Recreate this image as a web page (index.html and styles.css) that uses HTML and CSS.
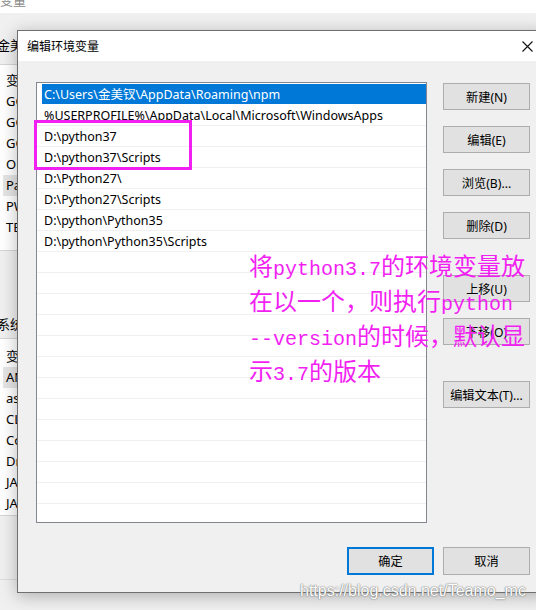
FILE: index.html
```html
<!DOCTYPE html>
<html lang="zh-CN">
<head>
<meta charset="utf-8">
<title>编辑环境变量</title>
<link rel="stylesheet" href="styles.css">
</head>
<body>
<div class="screen">
  <div class="parent">
    <div class="p-top"><span>变量</span></div>
    <div class="p-label user">金美钗 的用户变量(U)</div>
    <div class="p-list user-list">
      <div class="p-row">变量</div>
      <div class="p-row">GOPATH</div>
      <div class="p-row">GOROOT</div>
      <div class="p-row">GOBIN</div>
      <div class="p-row">OneDrive</div>
      <div class="p-row hl">Path</div>
      <div class="p-row">PWD</div>
      <div class="p-row">TEMP</div>
    </div>
    <div class="p-label sys">系统变量(S)</div>
    <div class="p-list sys-list">
      <div class="p-row">变量</div>
      <div class="p-row hl">ANDROID_HOME</div>
      <div class="p-row">asl.log</div>
      <div class="p-row">CLASSPATH</div>
      <div class="p-row">ComSpec</div>
      <div class="p-row">DriverData</div>
      <div class="p-row">JAVA_HOME</div>
      <div class="p-row">JAVA_HOME2</div>
    </div>
    <div class="p-foot"></div>
  </div>

  <div class="dialog">
    <div class="d-title">
      <span class="d-title-text">编辑环境变量</span>
      <svg class="d-close" width="11" height="11" viewBox="0 0 11 11"><path d="M0.5 0.5 L10.5 10.5 M10.5 0.5 L0.5 10.5" stroke="#111" stroke-width="1.1" fill="none"/></svg>
    </div>
    <div class="d-body">
      <div class="list">
        <div class="row sel"><div class="cell">C:\Users\金美钗\AppData\Roaming\npm</div></div>
        <div class="row"><div class="cell">%USERPROFILE%\AppData\Local\Microsoft\WindowsApps</div></div>
        <div class="row"><div class="cell">D:\python37</div></div>
        <div class="row"><div class="cell">D:\python37\Scripts</div></div>
        <div class="row"><div class="cell">D:\Python27\</div></div>
        <div class="row"><div class="cell">D:\Python27\Scripts</div></div>
        <div class="row"><div class="cell">D:\python\Python35</div></div>
        <div class="row"><div class="cell">D:\python\Python35\Scripts</div></div>
        <div class="row"><div class="cell"></div></div>
        <div class="row"><div class="cell"></div></div>
        <div class="row"><div class="cell"></div></div>
        <div class="row"><div class="cell"></div></div>
        <div class="row"><div class="cell"></div></div>
        <div class="row"><div class="cell"></div></div>
        <div class="row"><div class="cell"></div></div>
        <div class="row"><div class="cell"></div></div>
        <div class="row"><div class="cell"></div></div>
        <div class="row"><div class="cell"></div></div>
        <div class="row"><div class="cell"></div></div>
        <div class="row"><div class="cell"></div></div>
        <div class="row"><div class="cell"></div></div>
      </div>
      <div class="btns">
        <button class="btn">新建(N)</button>
        <button class="btn">编辑(E)</button>
        <button class="btn">浏览(B)...</button>
        <button class="btn">删除(D)</button>
        <button class="btn big-gap">上移(U)</button>
        <button class="btn">下移(O)</button>
        <button class="btn big-gap">编辑文本(T)...</button>
      </div>
    </div>
    <div class="d-foot">
      <button class="btn btn-wide default">确定</button>
      <button class="btn btn-wide">取消</button>
    </div>
  </div>

  <div class="mark"></div>
  <div class="note">
    <div>将<span class="en">python3.7</span>的环境变量放</div>
    <div>在以一个，则执行<span class="en">python</span></div>
    <div><span class="en">--version</span>的时候，默认显</div>
    <div>示<span class="en">3.7</span>的版本</div>
  </div>
  <div class="wm">https://blog.csdn.net/Teamo_mc</div>
</div>
</body>
</html>
```

FILE: styles.css
```css
* { box-sizing: border-box; }
html, body { margin: 0; padding: 0; }
body {
  width: 536px;
  height: 610px;
  overflow: hidden;
  background: #f0f0f0;
  font-family: "Noto Sans", "Noto Sans CJK SC", sans-serif;
  font-size: 12px;
  color: #000;
}
.screen {
  position: relative;
  width: 536px;
  height: 610px;
  overflow: hidden;
}

/* background parent window */
.parent {
  width: 536px;
  height: 610px;
  background: #f0f0f0;
}
.p-top {
  height: 13px;
  background: #fff;
  overflow: hidden;
}
.p-top span {
  display: block;
  margin-top: -9px;
  font-size: 13px;
  line-height: 18px;
  color: #8a8a8a;
}
.p-label {
  font-size: 13px;
  line-height: 16px;
  margin-left: -3px;
  white-space: nowrap;
}
.p-label.user { margin-top: 24px; margin-bottom: 11px; }
.p-label.sys { margin-top: 65px; margin-bottom: 6px; }
.p-list {
  background: #fff;
  border-top: 1px solid #d5d5d5;
  border-bottom: 1px solid #d5d5d5;
  overflow: hidden;
}
.user-list { height: 187px; padding-top: 5px; }
.sys-list { height: 178px; padding-top: 7px; }
.p-row {
  height: 21px;
  line-height: 21px;
  padding-left: 6px;
  font-size: 13px;
  white-space: nowrap;
}
.p-row.hl {
  margin-left: 3px;
  padding-left: 3px;
  background: #e5e5e5;
}
.p-foot {
  margin-top: 63px;
  border-top: 1px solid #dcdcdc;
}

/* dialog */
.dialog {
  position: absolute;
  left: 17px;
  top: 30px;
  width: 530px;
  height: 563px;
  background: #f0f0f0;
  border: 1px solid #6f6f6f;
  box-shadow: 0 3px 16px rgba(0, 0, 0, 0.28);
}
.d-title {
  height: 30px;
  background: #fff;
  display: flex;
  align-items: center;
  padding-left: 9px;
  padding-right: 13px;
}
.d-title-text {
  font-size: 12px;
}
.d-close {
  margin-left: auto;
  display: block;
}
.d-body {
  display: grid;
  grid-template-columns: 391px 87px;
  column-gap: 16px;
  padding: 21px 0 0 18px;
}
.list {
  height: 441px;
  background: #fff;
  border: 1px solid #828790;
  padding-top: 1px;
  overflow: hidden;
}
.row {
  height: 21px;
  border-bottom: 1px solid #f0f0f0;
  padding-left: 5px;
}
.cell {
  height: 20px;
  line-height: 22px;
  padding-left: 2px;
  white-space: nowrap;
  font-size: 12.5px;
  overflow: hidden;
}
.row.sel { border-bottom-color: #fff; }
.row.sel .cell {
  background: #0078d7;
  color: #fff;
}
.btns {
  display: flex;
  flex-direction: column;
  gap: 16px;
  padding-top: 1px;
}
.btn {
  height: 27px;
  width: 87px;
  margin: 0;
  padding: 0;
  background: #e1e1e1;
  border: 1px solid #adadad;
  border-radius: 0;
  font-family: "Noto Sans", "Noto Sans CJK SC", sans-serif;
  font-size: 12.2px;
  color: #000;
  white-space: nowrap;
}
.btn.big-gap { margin-top: 20px; }
.d-foot {
  display: flex;
  justify-content: flex-end;
  gap: 9px;
  padding-right: 16px;
  margin-top: 24px;
}
.btn-wide { height: 28px; }
.btn.default { border: 2px solid #0078d7; }

/* annotation overlays */
.mark {
  position: absolute;
  left: 34px;
  top: 120px;
  width: 158px;
  height: 50px;
  border: 3px solid #f21ff2;
}
.note {
  position: absolute;
  left: 249px;
  top: 250px;
  color: #f21ff2;
  font-family: "Noto Sans CJK SC", sans-serif;
  font-size: 24px;
  line-height: 30px;
  white-space: nowrap;
}
.note .en {
  font-family: "Liberation Mono", monospace;
  font-size: 20px;
}
.wm {
  position: absolute;
  left: 300px;
  top: 582px;
  font-family: "Liberation Sans", sans-serif;
  font-size: 16px;
  line-height: 18px;
  color: #fff;
  text-shadow: 0 0 1px #666, 0 0 2px #888;
  white-space: nowrap;
}
```
